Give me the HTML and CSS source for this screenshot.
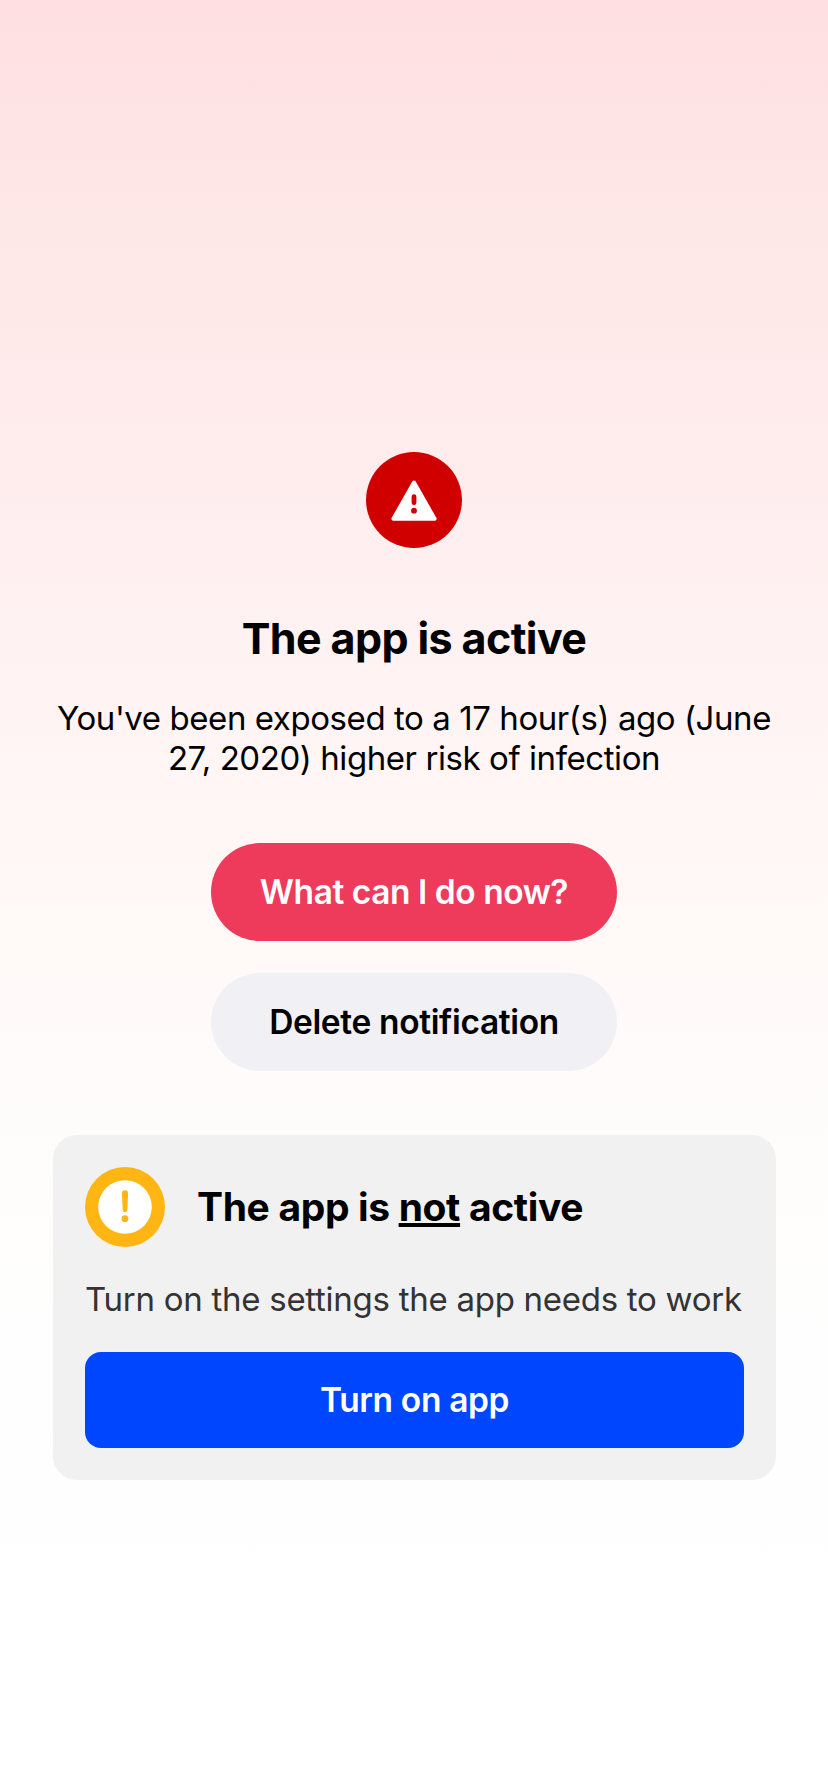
FILE: index.html
```html
<!DOCTYPE html>
<html lang="en">
<head>
<meta charset="utf-8">
<title>Exposure status</title>
<link rel="stylesheet" href="styles.css">
</head>
<body>
<main class="screen">
  <svg class="status-icon" viewBox="0 0 96 96" aria-hidden="true">
    <circle cx="48" cy="48" r="48" fill="#d00000"/>
    <path d="M48 30.6 68.6 66.8H27.4Z" fill="#fff" stroke="#fff" stroke-width="4" stroke-linejoin="round"/>
    <path d="M48 44.7v6" stroke="#d00000" stroke-width="4.8" stroke-linecap="round"/>
    <circle cx="48" cy="58.7" r="2.9" fill="#d00000"/>
  </svg>
  <h1 class="title">The app is active</h1>
  <p class="message"><span class="line">You've been exposed to a 17 hour(s) ago (June</span> <span class="line">27, 2020) higher risk of infection</span></p>
  <div class="actions">
    <button class="pill pill-primary">What can I do now?</button>
    <button class="pill pill-secondary">Delete notification</button>
  </div>
  <section class="card">
    <div class="card-head">
      <svg class="card-icon" viewBox="0 0 80 80" aria-hidden="true">
        <circle cx="40" cy="40" r="40" fill="#ffb612"/>
        <circle cx="40" cy="40" r="26.8" fill="#fff"/>
        <path d="M36.9 26.3a3.1 3.1 0 0 1 6.2 0L42.3 43a2.3 2.3 0 0 1-4.6 0Z" fill="#ffb612"/>
        <circle cx="40" cy="51.7" r="3.4" fill="#ffb612"/>
      </svg>
      <h2 class="card-title">The app is <span class="underlined">not</span> active</h2>
    </div>
    <p class="card-text">Turn on the settings the app needs to work</p>
    <button class="card-button">Turn on app</button>
  </section>
</main>
</body>
</html>
```
FILE: styles.css
```css
* { box-sizing: border-box; }
body { margin: 0; font-family: Inter, "Liberation Sans", sans-serif; color: #000; }
.screen {
  height: 1792px;
  padding: 452px 52px 0;
  display: flex;
  flex-direction: column;
  align-items: center;
  background: linear-gradient(#ffdfe1, #fee7e6 200px, #ffeced 452px, #fff1f1 600px, #fff6f5 780px, #fffaf9 1000px, #fefdfb 1150px, #fefefe 1350px, #fff 1700px);
}
.status-icon { width: 96px; height: 96px; flex: none; }
.title { margin: 64px 0 0; font-size: 43px; line-height: 52px; font-weight: 700; letter-spacing: -0.6px; white-space: nowrap; }
.message { margin: 34px 0 0; font-size: 33px; line-height: 40px; letter-spacing: -0.43px; text-align: center; white-space: nowrap; }
.line { display: block; }
.actions { margin-top: 65px; width: 406px; display: flex; flex-direction: column; gap: 32px; }
button { border: 0; padding: 0; font: inherit; white-space: nowrap; }
.pill { height: 98px; border-radius: 49px; font-size: 33.5px; font-weight: 600; }
.pill-primary { background: #ee3a5b; color: #fff; letter-spacing: -0.45px; }
.pill-secondary { background: #f0f0f5; color: #000; letter-spacing: -0.35px; }
.card { margin: 64px 0 0 1px; width: 723px; height: 345px; padding: 32px; border-radius: 24px; background: #f1f1f1; }
.card-head { display: flex; align-items: center; gap: 32px; }
.card-icon { width: 80px; height: 80px; flex: none; }
.card-title { margin: 0; font-size: 39px; line-height: 48px; font-weight: 700; letter-spacing: -0.35px; white-space: nowrap; }
.underlined { text-decoration: underline; text-decoration-thickness: 4px; text-underline-offset: 2px; text-decoration-skip-ink: none; }
.card-text { margin: 32px 0 0; font-size: 33px; line-height: 40px; letter-spacing: -0.27px; color: #333; white-space: nowrap; }
.card-button { display: block; width: 100%; height: 96px; margin-top: 33px; border-radius: 16px; background: #0046ff; color: #fff; font-size: 33.5px; font-weight: 600; letter-spacing: -0.35px; }
```
